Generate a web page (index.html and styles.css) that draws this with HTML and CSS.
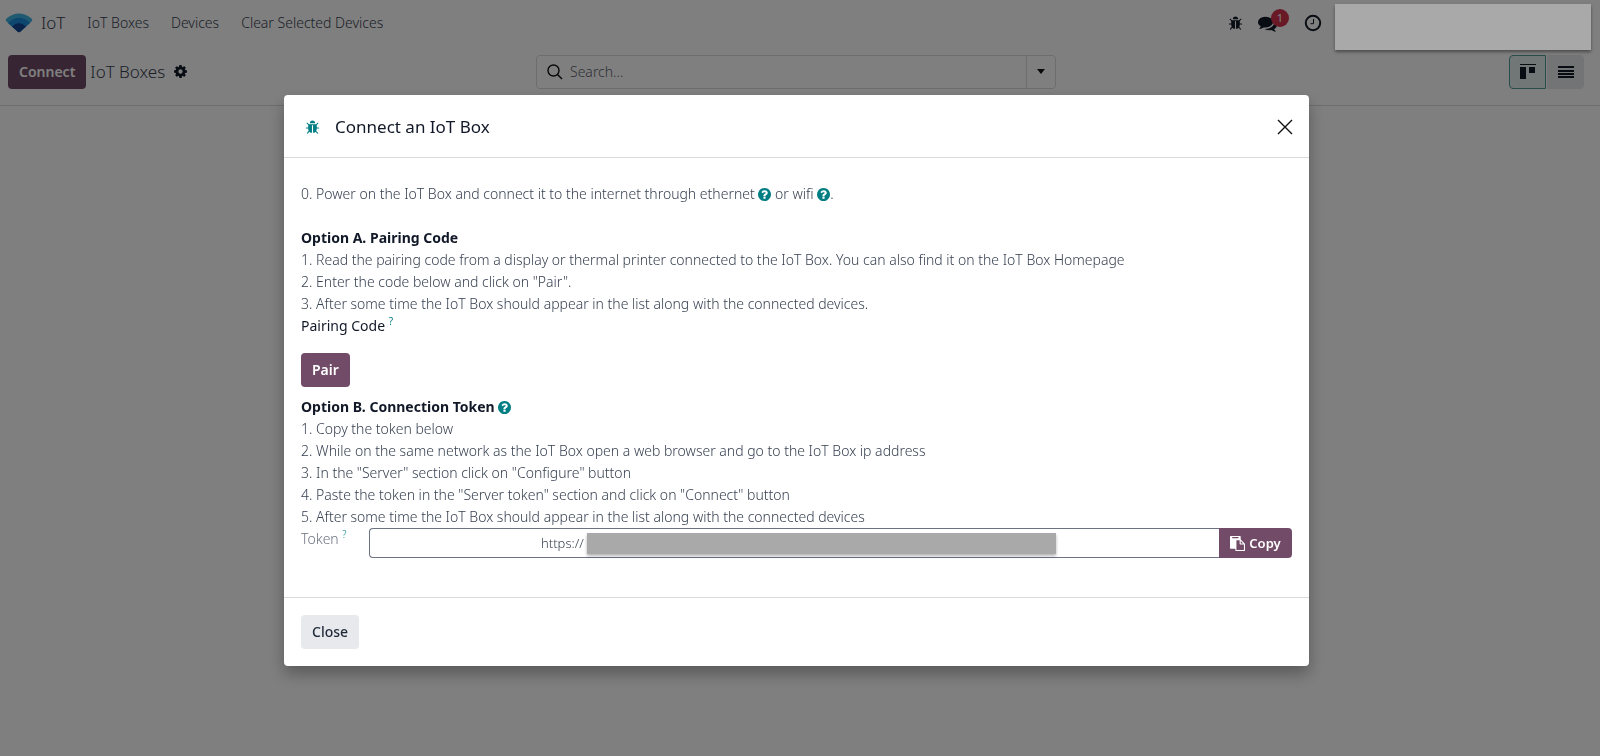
FILE: index.html
```html
<!DOCTYPE html>
<html lang="en">
<head>
  <meta charset="UTF-8">
  <meta name="viewport" content="width=device-width, initial-scale=1">
  <title>IoT Boxes</title>
  <link rel="stylesheet" href="styles.css">
</head>
<body>
  <!-- shared icons -->
  <svg class="sprite" aria-hidden="true">
    <symbol id="bug" viewBox="0 0 1792 1792"><path d="M1696 960q0 26-19 45t-45 19h-224q0 171-67 290l208 209q19 19 19 45t-19 45q-18 19-45 19t-45-19l-198-197q-5 5-15 13t-42 28.5-65 36.5-82 29-97 13v-896h-128v896q-51 0-101.5-13.5t-87-33-66-39-43.5-32.5l-15-14-183 207q-20 21-48 21-24 0-43-16-19-18-20.5-44.5t15.5-46.5l202-227q-58-114-58-274h-224q-26 0-45-19t-19-45 19-45 45-19h224v-294l-173-173q-19-19-19-45t19-45 45-19 45 19l173 173h844l173-173q19-19 45-19t45 19 19 45-19 45l-173 173v294h224q26 0 45 19t19 45zm-480-576h-640q0-133 93.5-226.5t226.5-93.5 226.5 93.5 93.5 226.5z"/></symbol>
    <symbol id="question" viewBox="128 128 1536 1536"><path d="M1024 1376v-192q0-14-9-23t-23-9h-192q-14 0-23 9t-9 23v192q0 14 9 23t23 9h192q14 0 23-9t9-23zm256-672q0-88-55.5-163t-138.5-116-170-41q-243 0-371 213-15 24 8 42l132 100q7 6 19 6 16 0 25-12 53-68 86-92 34-24 86-24 48 0 85.5 26t37.5 59q0 38-20 61t-68 45q-63 28-115.5 86.5t-52.5 125.5v36q0 14 9 23t23 9h192q14 0 23-9t9-23q0-19 21.5-49.5t54.5-49.5q32-18 49-28.5t46-35 44.5-48 28-60.5 12.5-81zm384 192q0 209-103 385.5t-279.5 279.5-385.5 103-385.5-103-279.5-279.5-103-385.5 103-385.5 279.5-279.5 385.5-103 385.5 103 279.5 279.5 103 385.5z"/></symbol>
  </svg>

  <header class="navbar">
    <a class="brand" href="#">
      <svg class="brand-logo" viewBox="0 0 28 20" aria-hidden="true">
        <path d="M1.500 5.500Q14-4.500 26.500 5.500Q28 7 26.500 8.500L15.500 18.500Q14 20 12.500 18.500L1.500 8.500Q0 7 1.500 5.500Z" fill="#3fb4e0"/>
        <path d="M3 9.900Q14 -0.500 25 9.900L15.500 18.500Q14 20 12.500 18.500Z" fill="#1a8fe0"/>
        <path d="M7 13.500Q14 6.500 21 13.500L15.500 18.500Q14 20 12.500 18.500Z" fill="#144694"/>
      </svg>
      <span>IoT</span>
    </a>
    <nav class="menu">
      <a href="#">IoT Boxes</a>
      <a href="#">Devices</a>
      <a href="#">Clear Selected Devices</a>
    </nav>
    <div class="systray">
      <button class="tray-button" aria-label="Debug tools"><svg class="icon"><use href="#bug"/></svg></button>
      <button class="tray-button messages" aria-label="Messages">
        <svg class="icon-comments" viewBox="0 0 1792 1792"><path d="M1408 768q0 139-94 257t-256.500 186.500-353.500 68.500q-86 0-176-16-124 88-278 128-36 9-86 16h-3q-11 0-20.500-8t-11.500-21q-1-3-1-6.500t.5-6.500 2-6l2.500-5 3.500-5.500 4-5 4.500-5 4-4.500q5-6 23-25t26-29.500 22.500-29 25-38.500 20.500-44q-124-72-195-177t-71-224q0-139 94-257t256.500-186.500 353.500-68.500 353.500 68.500 256.500 186.500 94 257zm384 256q0 120-71 224.500t-195 176.500q10 24 20.500 44t25 38.500 22.500 29 26 29.500 23 25q1 1 4 4.500t4.500 5 4 5 3.500 5.500l2.500 5 2 6 .5 6.500-1 6.500q-3 14-13 22t-22 7q-50-7-86-16-154-40-278-128-90 16-176 16-271 0-472-132 58 4 88 4 161 0 309-45t264-129q125-92 192-212t67-254q0-77-23-152 129 71 204 178t75 230z"/></svg>
        <span class="badge">1</span>
      </button>
      <button class="tray-button" aria-label="Activities">
        <svg class="icon-clock" viewBox="0 0 18 18"><circle cx="9" cy="9" r="7.200"/><path d="M9.500 5v4.700H6.500"/></svg>
      </button>
      <div class="user-mask"></div>
    </div>
  </header>

  <section class="control-panel">
    <div class="breadcrumb">
      <button class="btn btn-primary">Connect</button>
      <span class="breadcrumb-title">IoT Boxes</span>
      <button class="cog" aria-label="Actions">
        <svg class="icon" viewBox="0 0 1792 1792"><path d="M1152 896q0-106-75-181t-181-75-181 75-75 181 75 181 181 75 181-75 75-181zm512-109v222q0 12-8 23t-20 13l-185 28q-19 54-39 91 35 50 107 138 10 12 10 25t-9 23q-27 37-99 108t-94 71q-12 0-26-9l-138-108q-44 23-91 38-16 136-29 186-7 28-36 28h-222q-14 0-24.500-8.500t-11.500-21.500l-28-184q-49-16-90-37l-141 107q-10 9-25 9-14 0-25-11-126-114-165-168-7-10-7-23 0-12 8-23 15-21 51-66.500t54-70.500q-27-50-41-99l-183-27q-13-2-21-12.500t-8-23.500v-222q0-12 8-23t19-13l186-28q14-46 39-92-40-57-107-138-10-12-10-24 0-10 9-23 26-36 98.500-107.500t94.500-71.500q13 0 26 10l138 107q44-23 91-38 16-136 29-186 7-28 36-28h222q14 0 24.500 8.500t11.500 21.500l28 184q49 16 90 37l142-107q9-9 24-9 13 0 25 10 129 119 165 170 7 8 7 22 0 12-8 23-15 21-51 66.500t-54 70.500q26 50 41 98l183 28q13 2 21 12.500t8 23.500z"/></svg>
      </button>
    </div>
    <div class="search">
      <svg class="icon-search" viewBox="0 0 16 16" aria-hidden="true"><circle cx="6.500" cy="6.500" r="5.500"/><path d="M10.500 10.500l4.500 4.500"/></svg>
      <input class="search-input" type="text" placeholder="Search..." aria-label="Search">
      <button class="search-toggle" aria-label="Search options"><span class="caret"></span></button>
    </div>
    <div class="views">
      <button class="view-button active" aria-label="Kanban view">
        <svg class="icon-view" viewBox="0 0 16 16"><path d="M0 0h16v1H0zM0 3h6v12H0zM9 3h6v6H9z"/></svg>
      </button>
      <button class="view-button" aria-label="List view">
        <svg class="icon-view" viewBox="0 0 16 16"><path d="M0 2h16v2H0zM0 6h16v2H0zM0 9h16v2H0zM0 12h16v2H0z"/></svg>
      </button>
    </div>
  </section>

  <div class="backdrop">
    <div class="modal" role="dialog" aria-labelledby="modal-title">
      <header class="modal-header">
        <button class="debug" aria-label="Debug"><svg class="icon"><use href="#bug"/></svg></button>
        <h1 id="modal-title">Connect an IoT Box</h1>
        <button class="close" aria-label="Close dialog">
          <svg class="icon-close" viewBox="0 0 16 16"><path d="M1 1l14 14M15 1L1 15"/></svg>
        </button>
      </header>

      <div class="modal-body">
        <p class="intro">0. Power on the IoT Box and connect it to the internet through ethernet <a href="#" aria-label="Ethernet help"><svg class="help"><use href="#question"/></svg></a> or wifi <a href="#" aria-label="Wifi help"><svg class="help"><use href="#question"/></svg></a>.</p>

        <h2>Option A. Pairing Code</h2>
        <p>1. Read the pairing code from a display or thermal printer connected to the IoT Box. You can also find it on the IoT Box Homepage</p>
        <p>2. Enter the code below and click on "Pair".</p>
        <p>3. After some time the IoT Box should appear in the list along with the connected devices.</p>
        <p class="pairing">Pairing Code <sup>?</sup></p>
        <button class="btn btn-primary">Pair</button>

        <h2 class="option-b">Option B. Connection Token <a href="#" aria-label="Token help"><svg class="help"><use href="#question"/></svg></a></h2>
        <p>1. Copy the token below</p>
        <p>2. While on the same network as the IoT Box open a web browser and go to the IoT Box ip address</p>
        <p>3. In the "Server" section click on "Configure" button</p>
        <p>4. Paste the token in the "Server token" section and click on "Connect" button</p>
        <p>5. After some time the IoT Box should appear in the list along with the connected devices</p>

        <div class="token-row">
          <label for="token">Token <sup>?</sup></label>
          <div class="token-field">
            <div class="token-value">
              <input id="token" type="text" value="https://" readonly>
              <span class="token-mask"></span>
            </div>
            <button class="copy">
              <svg class="icon" viewBox="0 0 1792 1792"><path d="M768 1664h896v-640h-416q-40 0-68-28t-28-68v-416h-384v1152zm256-1440v-64q0-13-9.500-22.500t-22.500-9.500h-704q-13 0-22.500 9.500t-9.500 22.500v64q0 13 9.500 22.500t22.500 9.500h704q13 0 22.500-9.500t9.500-22.500zm256 672h299l-299-299v299zm512 128v672q0 40-28 68t-68 28h-960q-40 0-68-28t-28-68v-160h-544q-40 0-68-28t-28-68v-1344q0-40 28-68t68-28h1088q40 0 68 28t28 68v328q21 13 36 28l408 408q28 28 48 76t20 88z"/></svg>
              Copy
            </button>
          </div>
        </div>
      </div>

      <footer class="modal-footer">
        <button class="btn btn-secondary">Close</button>
      </footer>
    </div>
  </div>
</body>
</html>
```

FILE: styles.css
```css
* {
  box-sizing: border-box;
}

body {
  margin: 0;
  min-height: 100vh;
  background-color: #fff;
  color: #374151;
  font-family: "Segoe UI", "Noto Sans", sans-serif;
  font-size: 14px;
  font-weight: 350;
  line-height: 22px;
}

button,
input {
  font: inherit;
  color: inherit;
}

button {
  border: 0;
  padding: 0;
  background: none;
  cursor: pointer;
}

a {
  color: inherit;
  text-decoration: none;
}

h1,
h2,
p {
  margin: 0;
}

svg {
  display: block;
  flex: none;
  fill: currentColor;
}

.sprite {
  display: none;
}

.icon {
  width: 15px;
  height: 15px;
}

.btn {
  height: 34px;
  padding: 0 11px;
  border-radius: 4px;
  font-weight: 600;
}

.btn-primary {
  background: #714b67;
  color: #fff;
}

.btn-secondary {
  background: #e7e9ed;
  color: #1f2937;
  font-weight: 500;
}

/* top bar */
.navbar {
  display: flex;
  align-items: center;
  height: 46px;
  padding: 0 9px 0 5px;
}

.brand {
  display: flex;
  align-items: center;
  gap: 8px;
  font-size: 17px;
}

.brand-logo {
  width: 28px;
  height: 20px;
}

.menu {
  display: flex;
  gap: 22px;
  margin-left: 22px;
}

.systray {
  display: flex;
  align-items: center;
  align-self: flex-start;
  gap: 15px;
  height: 46px;
  margin-left: auto;
  color: #111827;
}

.tray-button {
  position: relative;
}

.messages {
  padding-right: 12px;
}

.icon-comments {
  width: 19px;
  height: 19px;
}

.badge {
  position: absolute;
  top: -5px;
  right: 0;
  width: 18px;
  height: 18px;
  border-radius: 9px;
  background: #d2304a;
  color: #fff;
  font-size: 11px;
  font-weight: 400;
  line-height: 18px;
  text-align: center;
}

.icon-clock {
  width: 18px;
  height: 18px;
  fill: none;
  stroke: currentColor;
  stroke-width: 2;
}

.icon-clock path {
  stroke-width: 1;
}

.user-mask {
  position: relative;
  z-index: 20;
  align-self: flex-start;
  width: 256px;
  height: 46px;
  margin: 4px 0 0 -2px;
  background: #a9a9a9;
  box-shadow: 0 2px 3px rgba(0, 0, 0, 0.4);
}

/* control panel */
.control-panel {
  display: grid;
  grid-template-columns: 1fr 520px 1fr;
  align-items: center;
  height: 60px;
  padding: 0 16px 8px 8px;
  border-bottom: 1px solid #d8dadd;
}

.breadcrumb {
  display: flex;
  align-items: center;
  gap: 4px;
}

.breadcrumb-title {
  font-size: 17px;
}

.cog {
  margin-left: 4px;
  color: #111827;
}

.search {
  display: flex;
  align-items: center;
  height: 34px;
  border: 1px solid #d8dadd;
  border-radius: 4px;
}

.icon-search {
  width: 16px;
  height: 16px;
  margin: 0 7px 0 10px;
}

.icon-search,
.icon-close {
  fill: none;
  stroke: #111;
  stroke-width: 1.4;
}

.search-input {
  flex: 1;
  min-width: 0;
  height: 100%;
  padding: 0;
  border: 0;
  outline: 0;
  background: none;
}

.search-input::placeholder {
  color: #5f636f;
}

.search-toggle {
  display: flex;
  align-items: center;
  justify-content: center;
  width: 29px;
  height: 100%;
  border-left: 1px solid #d8dadd;
}

.caret {
  border: 4px solid transparent;
  border-top: 5px solid #111;
  border-bottom: 0;
}

.views {
  display: flex;
  gap: 1px;
  justify-self: end;
  color: #111827;
}

.view-button {
  display: flex;
  align-items: center;
  justify-content: center;
  width: 37px;
  height: 34px;
  border: 1px solid #e7e9ed;
  border-radius: 0 4px 4px 0;
  background: #e7e9ed;
}

.view-button.active {
  border-color: #4f9a98;
  border-radius: 4px 0 0 4px;
  background: #e2eeee;
}

.icon-view {
  width: 16px;
  height: 16px;
}

/* dialog */
.backdrop {
  position: fixed;
  inset: 0;
  z-index: 10;
  padding: 95px 7px 0 0;
  background: rgba(0, 0, 0, 0.5);
  overflow: auto;
}

.modal {
  width: calc(100% - 32px);
  max-width: 1025px;
  margin: 0 auto;
  border-radius: 4px;
  background: #fff;
  box-shadow: 0 8px 16px rgba(0, 0, 0, 0.3);
}

.modal-header {
  display: flex;
  align-items: center;
  height: 63px;
  padding: 2px 16px 0 21px;
  border-bottom: 1px solid #d8dadd;
}

.debug {
  color: #017e84;
}

.modal-header h1 {
  margin-left: 15px;
  color: #111827;
  font-size: 17px;
  font-weight: 400;
}

.close {
  margin-left: auto;
}

.icon-close {
  width: 16px;
  height: 16px;
}

.modal-body {
  padding: 25px 17px 39px;
}

.modal-body h2 {
  color: #111827;
  font-size: 14px;
  font-weight: 700;
}

.intro {
  margin-bottom: 22px;
}

.help {
  display: inline-block;
  width: 13px;
  height: 13px;
  vertical-align: -2px;
  color: #017e84;
}

sup {
  color: #017e84;
  font-size: 10px;
  line-height: 0;
}

.pairing {
  margin-bottom: 16px;
  color: #111827;
  font-weight: 400;
}

.option-b {
  margin-top: 9px;
}

.token-row {
  display: flex;
  align-items: flex-start;
}

.token-row label {
  width: 68px;
  color: #6b7280;
}

.token-field {
  display: flex;
  flex: 1;
  height: 30px;
}

.token-value {
  display: flex;
  flex: 1;
  align-items: center;
  justify-content: center;
  padding-left: 8px;
  border: 1px solid #6b7280;
  border-right: 0;
  border-radius: 4px 0 0 4px;
}

.token-value input {
  flex: none;
  width: 46px;
  padding: 0;
  border: 0;
  outline: 0;
  background: none;
  font-size: 13px;
}

.token-mask {
  width: 469px;
  height: 21px;
  background: #a9a9a9;
  box-shadow: 0 2px 3px rgba(0, 0, 0, 0.3);
}

.copy {
  display: flex;
  align-items: center;
  justify-content: center;
  gap: 4px;
  width: 73px;
  border-radius: 0 4px 4px 0;
  background: #714b67;
  color: #fff;
  font-size: 13px;
  font-weight: 600;
}

.modal-footer {
  padding: 17px 17px;
  border-top: 1px solid #d8dadd;
}
```
